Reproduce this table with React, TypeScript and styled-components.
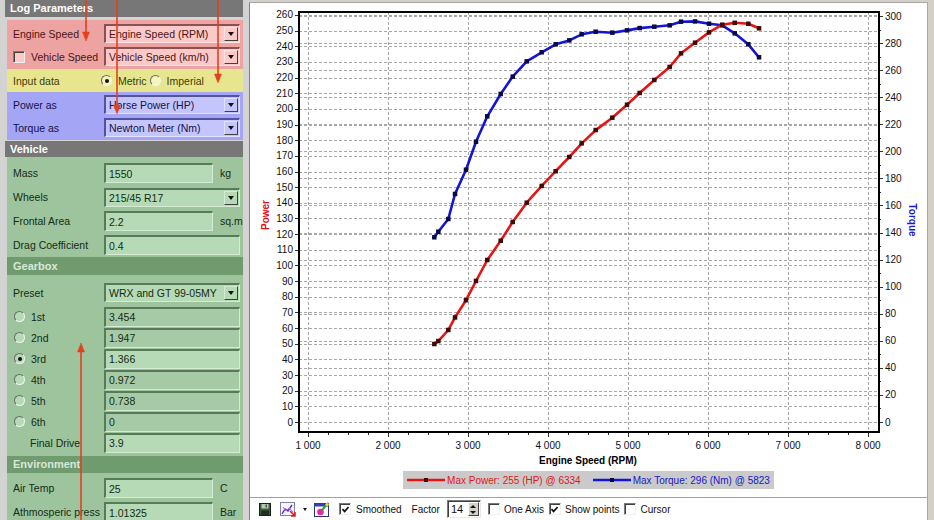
import React from "react";
import styled, { createGlobalStyle } from "styled-components";

type Tone = "red" | "yellow" | "blue" | "green";

const tones: Record<Tone, { bg: string; field: string; dim: string; text: string; dark: string; light: string }> = {
    red: { bg: "#eea3a3", field: "#fdc8c8", dim: "#f4b4b4", text: "#4a1414", dark: "#8c5050", light: "#ffe4e4" },
    yellow: { bg: "#e7e68f", field: "#f6f5bc", dim: "#eeee9f", text: "#3c3c0c", dark: "#8a8a3c", light: "#fbfbd8" },
    blue: { bg: "#a5a5f5", field: "#c5c5fe", dim: "#b2b2f8", text: "#12124a", dark: "#5252a0", light: "#e2e2ff" },
    green: { bg: "#9ec49e", field: "#b6dab6", dim: "#a6caa6", text: "#142c14", dark: "#577a57", light: "#d4ecd4" },
};

// rpm, power (HP), torque (Nm)
const runs: [number, number, number][] = [
    [2579, 49.8, 136.5],
    [2629, 51.7, 140.6],
    [2754, 58.8, 150.0],
    [2838, 66.8, 168.5],
    [2975, 77.8, 186.4],
    [3100, 90.1, 207.1],
    [3241, 103.5, 225.9],
    [3409, 115.8, 242.4],
    [3559, 127.8, 255.2],
    [3734, 140.1, 266.5],
    [3921, 150.8, 273.2],
    [4096, 160.2, 279.1],
    [4266, 169.3, 282.0],
    [4421, 178.0, 286.5],
    [4596, 186.5, 288.4],
    [4804, 194.4, 287.7],
    [4988, 202.7, 289.4],
    [5146, 210.2, 291.1],
    [5329, 218.5, 292.1],
    [5521, 226.8, 293.1],
    [5663, 235.5, 295.8],
    [5838, 242.3, 296.0],
    [6013, 248.9, 294.3],
    [6179, 253.8, 293.1],
    [6334, 255.0, 287.2],
    [6504, 254.4, 279.1],
    [6638, 251.5, 269.5],
];

const GlobalStyle = createGlobalStyle`
    html, body {
        margin: 0;
        padding: 0;
        background: #d4d0c8;
        overflow: hidden;
    }
    body {
        font-family: "Liberation Sans", Arial, sans-serif;
        font-size: 11px;
    }
`;

const Window = styled.div`
    position: relative;
    display: flex;
    width: 934px;
    height: 520px;
    box-sizing: border-box;
    padding-right: 6px;
    background: #d4d0c8;
    overflow: hidden;
`;

/* ---------- left panel ---------- */

const LeftPanel = styled.div`
    width: 249px;
    flex-shrink: 0;
    box-sizing: border-box;
    padding: 0 6px 0 5px;
    background: #d3d3d3;
    display: flex;
    flex-direction: column;
    overflow: hidden;
    font-size: 10.5px;
`;

const PanelHeader = styled.div<{ $gap?: number; $h?: number }>`
    flex-shrink: 0;
    height: ${p => p.$h ?? 17}px;
    line-height: ${p => p.$h ?? 17}px;
    margin-top: ${p => p.$gap ?? 0}px;
    padding-left: 5px;
    background: #777777;
    color: #ffffff;
    font-weight: bold;
    font-size: 11px;
`;

const Section = styled.div<{ $tone: Tone; $pad?: string; $grow?: boolean }>`
    margin-left: 2px;
    flex: ${p => (p.$grow ? "1" : "none")};
    padding: ${p => p.$pad ?? "0"};
    background: ${p => tones[p.$tone].bg};
    color: ${p => tones[p.$tone].text};
`;

const SubHeader = styled.div<{ $h: number; $gap?: number }>`
    height: ${p => p.$h}px;
    line-height: ${p => p.$h}px;
    margin-top: ${p => p.$gap ?? 0}px;
    padding-left: 6px;
    background: #6f9b6f;
    color: #d8e8d8;
    font-weight: bold;
    font-size: 11px;
`;

const Group = styled.div<{ $pad: number }>`
    padding-top: ${p => p.$pad}px;
`;

const Row = styled.div<{ $h: number; $unit?: boolean }>`
    height: ${p => p.$h}px;
    display: grid;
    grid-template-columns: ${p => (p.$unit ? "91px 109px 1fr" : "91px 1fr")};
    align-items: center;
    padding: 0 3px 0 6px;
`;

const Label = styled.span<{ $indent?: number }>`
    display: flex;
    align-items: center;
    gap: 6px;
    padding-left: ${p => p.$indent ?? 0}px;
    white-space: nowrap;
`;

const Unit = styled.span`
    padding-left: 7px;
    white-space: nowrap;
`;

const Field = styled.div<{ $tone: Tone; $dim?: boolean; $h?: number }>`
    box-sizing: border-box;
    height: ${p => p.$h ?? 20}px;
    display: flex;
    align-items: center;
    padding-left: 3px;
    min-width: 0;
    white-space: nowrap;
    overflow: hidden;
    background: ${p => (p.$dim ? tones[p.$tone].dim : tones[p.$tone].field)};
    color: ${p => tones[p.$tone].text};
    border-style: solid;
    border-width: 2px 1px 1px 2px;
    border-color: ${p => `${tones[p.$tone].dark} ${tones[p.$tone].light} ${tones[p.$tone].light} ${tones[p.$tone].dark}`};
`;

const DropButton = styled.span<{ $tone: Tone }>`
    margin-left: auto;
    margin-right: 1px;
    width: 14px;
    height: 14px;
    flex-shrink: 0;
    box-sizing: border-box;
    display: flex;
    align-items: center;
    justify-content: center;
    background: ${p => tones[p.$tone].field};
    border: 1px solid;
    border-color: ${p => `${tones[p.$tone].light} #404040 #404040 ${tones[p.$tone].light}`};

    &::after {
        content: "";
        border-left: 3.5px solid transparent;
        border-right: 3.5px solid transparent;
        border-top: 4px solid #111;
    }
`;

const RadioDot = styled.span<{ $tone: Tone; $on?: boolean }>`
    width: 11px;
    height: 11px;
    flex-shrink: 0;
    box-sizing: border-box;
    border-radius: 50%;
    display: inline-flex;
    align-items: center;
    justify-content: center;
    background: ${p => tones[p.$tone].field};
    border: 1px solid;
    border-color: #6a6a6a #f4f4f4 #f4f4f4 #6a6a6a;

    &::after {
        content: "";
        display: ${p => (p.$on ? "block" : "none")};
        width: 4px;
        height: 4px;
        border-radius: 50%;
        background: #111;
    }
`;

const TickBox = styled.span<{ $bg: string }>`
    width: 12px;
    height: 12px;
    flex-shrink: 0;
    box-sizing: border-box;
    display: inline-flex;
    align-items: center;
    justify-content: center;
    background: ${p => p.$bg};
    border: 1px solid;
    border-color: #7a7a7a #f0f0f0 #f0f0f0 #7a7a7a;
    box-shadow: inset 1px 1px 0 #404040;
`;

const RadioGroup = styled.div`
    display: flex;
    align-items: center;
    margin-left: -3px;
`;

const RadioText = styled.span<{ $gap: number }>`
    margin: 0 ${p => p.$gap}px 0 6px;
`;

const Select = ({ tone, value, dim }: { tone: Tone; value: string; dim?: boolean }) => (
    <Field $tone={tone} $dim={dim} $h={19}>
        {value}
        <DropButton $tone={tone} />
    </Field>
);

const Check = ({ on, bg }: { on?: boolean; bg: string }) => (
    <TickBox $bg={bg}>
        {on && (
            <svg width="9" height="9" viewBox="0 0 9 9">
                <path d="M1.5 4.2 L3.6 6.4 L7.6 2" fill="none" stroke="#111" strokeWidth="1.7" />
            </svg>
        )}
    </TickBox>
);

const gears = [
    { name: "1st", ratio: "3.454" },
    { name: "2nd", ratio: "1.947" },
    { name: "3rd", ratio: "1.366", on: true },
    { name: "4th", ratio: "0.972" },
    { name: "5th", ratio: "0.738" },
    { name: "6th", ratio: "0" },
];

const Parameters = () => (
    <LeftPanel>
        <PanelHeader>Log Parameters</PanelHeader>
        <Section $tone="red" $pad="2px 0 1px" style={{ marginTop: 3 }}>
            <Row $h={23}>
                <Label>Engine Speed</Label>
                <Select tone="red" value="Engine Speed (RPM)" />
            </Row>
            <Row $h={23}>
                <Label>
                    <Check bg={tones.red.field} />
                    Vehicle Speed
                </Label>
                <Select tone="red" value="Vehicle Speed (km/h)" />
            </Row>
        </Section>
        <Section $tone="yellow">
            <Row $h={23}>
                <Label>Input data</Label>
                <RadioGroup>
                    <RadioDot $tone="yellow" $on />
                    <RadioText $gap={3}>Metric</RadioText>
                    <RadioDot $tone="yellow" />
                    <RadioText $gap={0}>Imperial</RadioText>
                </RadioGroup>
            </Row>
        </Section>
        <Section $tone="blue" $pad="1px 0">
            <Row $h={23}>
                <Label>Power as</Label>
                <Select tone="blue" value="Horse Power (HP)" />
            </Row>
            <Row $h={23}>
                <Label>Torque as</Label>
                <Select tone="blue" value="Newton Meter (Nm)" />
            </Row>
        </Section>
        <PanelHeader $gap={1} $h={16}>Vehicle</PanelHeader>
        <Section $tone="green" $grow>
            <Group $pad={4}>
                <Row $h={24} $unit>
                    <Label>Mass</Label>
                    <Field $tone="green">1550</Field>
                    <Unit>kg</Unit>
                </Row>
                <Row $h={24}>
                    <Label>Wheels</Label>
                    <Select tone="green" value="215/45 R17" />
                </Row>
                <Row $h={24} $unit>
                    <Label>Frontal Area</Label>
                    <Field $tone="green">2.2</Field>
                    <Unit>sq.m</Unit>
                </Row>
                <Row $h={24}>
                    <Label>Drag Coefficient</Label>
                    <Field $tone="green">0.4</Field>
                </Row>
            </Group>
            <SubHeader $h={18}>Gearbox</SubHeader>
            <Group $pad={4}>
                <Row $h={27}>
                    <Label>Preset</Label>
                    <Select tone="green" value="WRX and GT 99-05MY" />
                </Row>
                {gears.map(g => (
                    <Row $h={21} key={g.name}>
                        <Label $indent={1}>
                            <RadioDot $tone="green" $on={g.on} />
                            {g.name}
                        </Label>
                        <Field $tone="green" $dim={!g.on}>{g.ratio}</Field>
                    </Row>
                ))}
                <Row $h={21}>
                    <Label $indent={17}>Final Drive</Label>
                    <Field $tone="green">3.9</Field>
                </Row>
            </Group>
            <SubHeader $h={17} $gap={3}>Environment</SubHeader>
            <Group $pad={3}>
                <Row $h={24} $unit>
                    <Label>Air Temp</Label>
                    <Field $tone="green">25</Field>
                    <Unit>C</Unit>
                </Row>
                <Row $h={24} $unit>
                    <Label>Athmosperic press</Label>
                    <Field $tone="green">1.01325</Field>
                    <Unit>Bar</Unit>
                </Row>
            </Group>
        </Section>
    </LeftPanel>
);

/* ---------- chart ---------- */

const RightPanel = styled.div`
    flex: 1;
    display: flex;
    flex-direction: column;
    margin-top: 2px;
    background: #ffffff;
    border-top: 1px solid #a8a8a8;
    border-left: 1px solid #808080;
    border-right: 1px solid #a8a8a8;
`;

const ChartSvg = styled.svg`
    display: block;
    flex-shrink: 0;
    font-family: "Liberation Sans", Arial, sans-serif;
    font-size: 10px;
`;

const LegendRow = styled.div`
    display: flex;
    justify-content: center;
    margin-top: 2px;
`;

const Legend = styled.div`
    height: 18px;
    display: flex;
    align-items: center;
    padding: 0 4px;
    background: #cacaca;
    font-size: 10px;
`;

const LegendItem = styled.span<{ $color: string; $gap?: number }>`
    display: flex;
    align-items: center;
    margin-left: ${p => p.$gap ?? 0}px;
    color: ${p => p.$color};
    white-space: nowrap;
`;

const W = 677;
const H = 466;
const PL = 49;
const PR = 629;
const PT = 9;
const PB = 429;
const xOf = (rpm: number) => 58 + (rpm - 1000) * 0.08;
const yPow = (v: number) => 419 - v * 1.5654;
const yTq = (v: number) => 419 - v * 1.3533;
const range = (from: number, to: number, step: number) => {
    const out: number[] = [];
    for (let v = from; v <= to; v += step) out.push(v);
    return out;
};

const Series = ({ pts, color, marker }: { pts: [number, number][]; color: string; marker: string }) => (
    <g>
        <polyline
            points={pts.map(([x, y]) => `${x.toFixed(1)},${y.toFixed(1)}`).join(" ")}
            fill="none"
            stroke={color}
            strokeWidth={2.6}
            strokeLinejoin="round"
        />
        {pts.map(([x, y], i) => (
            <rect key={i} x={x - 2.25} y={y - 2.25} width={4.5} height={4.5} fill={marker} />
        ))}
    </g>
);

const Swatch = ({ color, marker }: { color: string; marker: string }) => (
    <svg width="38" height="8" style={{ marginRight: 2 }}>
        <line x1="0" y1="4" x2="38" y2="4" stroke={color} strokeWidth="2.6" />
        <rect x="17" y="2" width="4" height="4" fill={marker} />
    </svg>
);

const DynoChart = () => {
    const grid = "#a8a8a8";
    return (
        <ChartSvg width={W} height={H} viewBox={`0 0 ${W} ${H}`}>
            <g stroke={grid} strokeWidth={1} strokeDasharray="3 2">
                {range(1000, 8000, 1000).map(r => (
                    <line key={`v${r}`} x1={xOf(r) + 0.5} x2={xOf(r) + 0.5} y1={PT} y2={PB} />
                ))}
                {range(0, 260, 10).map(v => (
                    <line key={`p${v}`} x1={PL} x2={PR} y1={Math.round(yPow(v)) + 0.5} y2={Math.round(yPow(v)) + 0.5} />
                ))}
                {range(0, 300, 20).map(v => (
                    <line key={`t${v}`} x1={PL} x2={PR} y1={Math.round(yTq(v)) + 0.5} y2={Math.round(yTq(v)) + 0.5} />
                ))}
            </g>

            <g stroke="#333" strokeWidth={1}>
                {range(0, 260, 10).map(v => (
                    <line key={`pt${v}`} x1={PL - 4} x2={PL} y1={Math.round(yPow(v)) + 0.5} y2={Math.round(yPow(v)) + 0.5} />
                ))}
                {range(0, 300, 10).map(v => (
                    <line
                        key={`tt${v}`}
                        x1={PR}
                        x2={PR + (v % 20 === 0 ? 4 : 2)}
                        y1={Math.round(yTq(v)) + 0.5}
                        y2={Math.round(yTq(v)) + 0.5}
                    />
                ))}
                {range(1000, 8000, 250).map(r => (
                    <line key={`xt${r}`} x1={xOf(r) + 0.5} x2={xOf(r) + 0.5} y1={PB} y2={PB + (r % 1000 === 0 ? 5 : 3)} />
                ))}
            </g>

            <rect x={PL} y={PT} width={PR - PL} height={PB - PT} fill="none" stroke="#000" strokeWidth={2} />

            <g fill="#111">
                {range(0, 260, 10).map(v => (
                    <text key={`pl${v}`} x={PL - 6} y={yPow(v) + 3.5} textAnchor="end">{v}</text>
                ))}
                {range(0, 300, 20).map(v => (
                    <text key={`tl${v}`} x={PR + 6} y={yTq(v) + 3.5}>{v}</text>
                ))}
                {range(1000, 8000, 1000).map(r => (
                    <text key={`xl${r}`} x={xOf(r)} y={446} textAnchor="middle">{`${r / 1000} 000`}</text>
                ))}
            </g>

            <text x={338} y={461} textAnchor="middle" fontWeight="bold" fill="#000">Engine Speed (RPM)</text>
            <text x={0} y={0} transform="translate(19 212) rotate(-90)" textAnchor="middle" fontWeight="bold" fill="#e01010">Power</text>
            <text x={0} y={0} transform="translate(659 217) rotate(90)" textAnchor="middle" fontWeight="bold" fill="#1818d0">Torque</text>

            <Series pts={runs.map(([r, , t]) => [xOf(r), yTq(t)])} color="#1414d8" marker="#0a0a40" />
            <Series pts={runs.map(([r, p]) => [xOf(r), yPow(p)])} color="#e81414" marker="#400808" />
        </ChartSvg>
    );
};

/* ---------- toolbar ---------- */

const Toolbar = styled.div`
    margin-top: auto;
    height: 22px;
    display: flex;
    align-items: center;
    padding-left: 9px;
    border-top: 1px solid #a0a0a0;
    font-size: 10px;
    color: #111;
`;

const Tool = styled.span<{ $ml?: number }>`
    display: inline-flex;
    align-items: center;
    gap: 5px;
    margin-left: ${p => p.$ml ?? 0}px;
    white-space: nowrap;
`;

const Spin = styled.span`
    width: 34px;
    height: 18px;
    box-sizing: border-box;
    display: inline-flex;
    align-items: center;
    padding-left: 3px;
    background: #fff;
    border: 1px solid;
    border-color: #7a7a7a #e8e8e8 #e8e8e8 #7a7a7a;
    box-shadow: inset 1px 1px 0 #404040;
    font-size: 11px;
`;

const SpinButtons = styled.span`
    margin-left: auto;
    width: 11px;
    height: 14px;
    margin-right: 1px;
    display: flex;
    flex-direction: column;
    justify-content: space-around;
    align-items: center;
    background: #d4d0c8;
    border: 1px solid;
    border-color: #fff #404040 #404040 #fff;
    box-sizing: border-box;

    &::before,
    &::after {
        content: "";
        border-left: 3px solid transparent;
        border-right: 3px solid transparent;
    }
    &::before {
        border-bottom: 3px solid #111;
    }
    &::after {
        border-top: 3px solid #111;
    }
`;

const FloppyIcon = () => (
    <svg width="12" height="13" viewBox="0 0 12 13">
        <rect x="0.5" y="0.5" width="11" height="12" fill="#3d5e3d" stroke="#142414" />
        <rect x="2.5" y="1" width="7" height="4.5" fill="#b8c8b8" />
        <rect x="6.5" y="1.5" width="1.5" height="3" fill="#3d5e3d" />
        <rect x="2" y="7.5" width="8" height="4.5" fill="#1e2e1e" />
    </svg>
);

const GraphIcon = () => (
    <svg width="16" height="15" viewBox="0 0 16 15">
        <rect x="0.5" y="0.5" width="14" height="13" fill="#f4f4ff" stroke="#8080a0" />
        <path d="M2 12 L5 7 L8 9 L12 3" fill="none" stroke="#3a3ad0" strokeWidth="1.4" />
        <path d="M3 5 L6 9 L9 6 L13 10" fill="none" stroke="#d060d0" strokeWidth="1" />
        <path d="M10 9 L15 14 M15 10 L15 14 L11 14" fill="none" stroke="#e01818" strokeWidth="1.5" />
    </svg>
);

const PaintIcon = () => (
    <svg width="16" height="15" viewBox="0 0 16 15">
        <rect x="0.5" y="1.5" width="14" height="13" fill="#fff" stroke="#30307a" />
        <rect x="0.5" y="1.5" width="14" height="3" fill="#3c3cb4" />
        <circle cx="6.5" cy="10" r="3.3" fill="#e02ca0" />
        <path d="M8 8 L14.5 0.8" stroke="#28a028" strokeWidth="2" />
        <circle cx="13" cy="2.5" r="1.6" fill="#f0e040" />
    </svg>
);

const SmallArrow = styled.span`
    margin-left: 7px;
    border-left: 2.5px solid transparent;
    border-right: 2.5px solid transparent;
    border-top: 3px solid #111;
`;

const ChartToolbar = () => (
    <Toolbar>
        <Tool><FloppyIcon /></Tool>
        <Tool $ml={9}><GraphIcon /></Tool>
        <SmallArrow />
        <Tool $ml={7}><PaintIcon /></Tool>
        <Tool $ml={9}><Check on bg="#fff" />Smoothed</Tool>
        <Tool $ml={10}>Factor</Tool>
        <Tool $ml={7}>
            <Spin>14<SpinButtons /></Spin>
        </Tool>
        <Tool $ml={7} style={{ gap: 4 }}><Check bg="#fff" />One Axis</Tool>
        <Tool $ml={5} style={{ gap: 4 }}><Check on bg="#fff" />Show points</Tool>
        <Tool $ml={5} style={{ gap: 4 }}><Check bg="#fff" />Cursor</Tool>
    </Toolbar>
);

/* ---------- annotation arrows drawn over the screenshot ---------- */

const Overlay = styled.svg`
    position: absolute;
    left: 0;
    top: 0;
    pointer-events: none;
`;

const arrows = [
    { x: 86, from: 0, tip: 41 },
    { x: 117, from: 0, tip: 114 },
    { x: 218, from: 0, tip: 83 },
    { x: 81, from: 520, tip: 343 },
];

const Annotations = () => (
    <Overlay width="934" height="520">
        {arrows.map((a, i) => {
            const dir = a.tip > a.from ? 1 : -1;
            const base = a.tip - dir * 9;
            return (
                <g key={i} fill="#e2401e" stroke="#e2401e">
                    <line x1={a.x} x2={a.x} y1={a.from} y2={base} strokeWidth={1.6} />
                    <polygon points={`${a.x - 3.5},${base} ${a.x + 3.5},${base} ${a.x},${a.tip}`} strokeWidth={0.5} />
                </g>
            );
        })}
    </Overlay>
);

const App = () => (
    <>
        <GlobalStyle />
        <Window>
            <Parameters />
            <RightPanel>
                <DynoChart />
                <LegendRow>
                    <Legend>
                        <LegendItem $color="#e01818">
                            <Swatch color="#e81414" marker="#400808" />
                            Max Power: 255 (HP) @ 6334
                        </LegendItem>
                        <LegendItem $color="#1818c8" $gap={12}>
                            <Swatch color="#1414d8" marker="#0a0a40" />
                            Max Torque: 296 (Nm) @ 5823
                        </LegendItem>
                    </Legend>
                </LegendRow>
                <ChartToolbar />
            </RightPanel>
            <Annotations />
        </Window>
    </>
);

export default App;
